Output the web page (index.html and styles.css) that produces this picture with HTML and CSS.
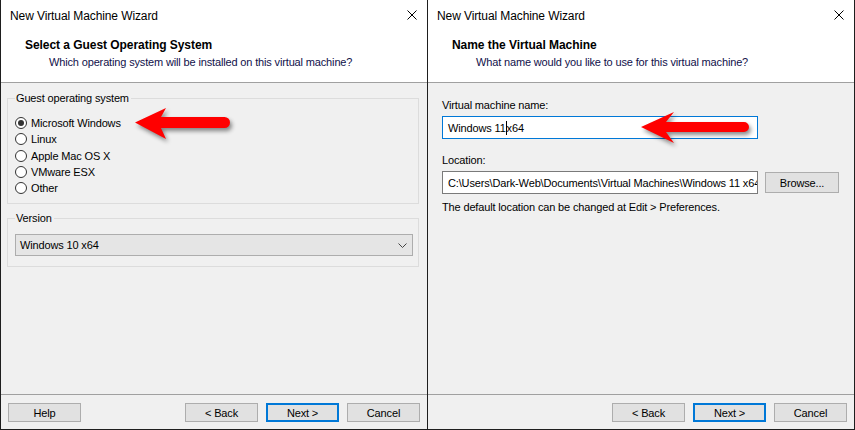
FILE: index.html
```html
<!DOCTYPE html>
<html lang="en">
<head>
  <meta charset="UTF-8" />
  <title>New Virtual Machine Wizard</title>
  <link rel="stylesheet" href="styles.css">
</head>
<body>
  <div class="screen">

    <!-- Step: guest OS -->
    <div class="window">
      <div class="titlebar">
        <div class="title-text">New Virtual Machine Wizard</div>
        <svg class="close-icon" viewBox="0 0 10 10"><path d="M0.5 0.5L9.5 9.5M9.5 0.5L0.5 9.5"/></svg>
      </div>
      <div class="header">
        <div class="header-title">Select a Guest Operating System</div>
        <div class="header-sub">Which operating system will be installed on this virtual machine?</div>
      </div>
      <div class="body body-os">
        <fieldset class="group">
          <legend>Guest operating system</legend>
          <div class="radio-row"><span class="radio checked"></span>Microsoft Windows</div>
          <div class="radio-row"><span class="radio"></span>Linux</div>
          <div class="radio-row"><span class="radio"></span>Apple Mac OS X</div>
          <div class="radio-row"><span class="radio"></span>VMware ESX</div>
          <div class="radio-row"><span class="radio"></span>Other</div>
        </fieldset>
        <fieldset class="group group-version">
          <legend>Version</legend>
          <div class="combo">
            <span>Windows 10 x64</span>
            <svg class="chevron" viewBox="0 0 9 5"><path d="M0.5 0.5L4.5 4.5L8.5 0.5"/></svg>
          </div>
        </fieldset>
      </div>
      <div class="footer">
        <button class="btn">Help</button>
        <div class="nav-buttons">
          <button class="btn">&lt; Back</button>
          <button class="btn default">Next &gt;</button>
          <button class="btn">Cancel</button>
        </div>
      </div>
    </div>

    <!-- Step: name -->
    <div class="window">
      <div class="titlebar">
        <div class="title-text">New Virtual Machine Wizard</div>
        <svg class="close-icon" viewBox="0 0 10 10"><path d="M0.5 0.5L9.5 9.5M9.5 0.5L0.5 9.5"/></svg>
      </div>
      <div class="header">
        <div class="header-title">Name the Virtual Machine</div>
        <div class="header-sub">What name would you like to use for this virtual machine?</div>
      </div>
      <div class="body body-name">
        <div class="field-label">Virtual machine name:</div>
        <div class="textbox focused">Windows 11<span class="caret"></span>x64</div>
        <div class="field-label label-location">Location:</div>
        <div class="location-row">
          <div class="textbox">C:\Users\Dark-Web\Documents\Virtual Machines\Windows 11 x64</div>
          <button class="btn browse">Browse...</button>
        </div>
        <div class="hint">The default location can be changed at Edit &gt; Preferences.</div>
      </div>
      <div class="footer">
        <div class="nav-buttons">
          <button class="btn">&lt; Back</button>
          <button class="btn default">Next &gt;</button>
          <button class="btn">Cancel</button>
        </div>
      </div>
    </div>

    <!-- Red annotation arrows -->
    <svg class="arrow arrow-os" viewBox="0 0 104 40">
      <path d="M2 17.5L33 3L28 12H91.5A5.5 5.5 0 0 1 91.5 23H28L33 34Z"/>
    </svg>
    <svg class="arrow arrow-name" viewBox="0 0 118 42">
      <path d="M2 18L35 3L27 13H105A5 5 0 0 1 105 23H27L35 34Z"/>
    </svg>
  </div>
</body>
</html>
```

FILE: styles.css
```css
/* Basic reset */
html, body {
  margin: 0;
  padding: 0;
  width: 855px;
  height: 430px;
  overflow: hidden;
  font-family: "Liberation Sans", Arial, sans-serif;
  font-size: 11px;
  letter-spacing: -0.15px;
  color: #000;
}

/* Two dialogs side by side on a dark frame */
.screen {
  position: relative;
  display: flex;
  gap: 1px;
  height: 430px;
  padding: 0 1px 1px 1px;
  box-sizing: border-box;
  background: #1e1e1e;
}
.window {
  width: 426px;
  display: flex;
  flex-direction: column;
  background: #f0f0f0;
}

/* Title bar */
.titlebar {
  height: 30px;
  background: #fff;
  display: flex;
  align-items: center;
  padding-left: 9px;
  padding-right: 10px;
}
.title-text {
  flex: 1;
  font-size: 12px;
  letter-spacing: -0.1px;
  padding-top: 1px;
}
.close-icon {
  width: 10px;
  height: 10px;
}
.close-icon path {
  stroke: #000;
  stroke-width: 1;
  fill: none;
}

/* Wizard header */
.header {
  height: 44px;
  background: #fff;
  border-bottom: 1px solid #a0a0a0;
  padding-top: 8px;
}
.header-title {
  font-weight: bold;
  font-size: 12px;
  letter-spacing: -0.05px;
  line-height: 15px;
  padding-left: 24px;
}
.header-sub {
  line-height: 16px;
  margin-top: 1px;
  padding-left: 48px;
  color: #10104a;
}

/* Content area */
.body {
  flex: 1;
}
.body-os {
  padding: 0 8px 0 6px;
}
.group {
  margin: 8px 0 0 0;
  padding: 10px 5px 7px 7px;
  border: 1px solid #dcdcdc;
  min-width: 0;
}
.group legend {
  padding: 0 2px 0 1px;
  line-height: 14px;
}
.group-version {
  margin-top: 7px;
  padding-top: 9px;
  padding-bottom: 10px;
}
.radio-row {
  display: flex;
  align-items: center;
  height: 16.3px;
  gap: 4px;
}
.radio {
  width: 12px;
  height: 12px;
  box-sizing: border-box;
  border: 1px solid #333;
  border-radius: 50%;
  background: #fff;
  display: flex;
  align-items: center;
  justify-content: center;
}
.radio.checked::after {
  content: "";
  width: 6px;
  height: 6px;
  border-radius: 50%;
  background: #333;
}
.combo {
  height: 22px;
  box-sizing: border-box;
  border: 1px solid #adadad;
  background: #e5e5e5;
  display: flex;
  align-items: center;
  padding: 0 5px 0 4px;
}
.combo span {
  flex: 1;
}
.chevron {
  width: 9px;
  height: 5px;
}
.chevron path {
  stroke: #444;
  fill: none;
}

/* Name page */
.body-name {
  padding: 14px 0 0 14px;
}
.field-label {
  line-height: 16px;
  margin-bottom: 3px;
}
.label-location {
  margin-top: 13px;
}
.textbox {
  width: 316px;
  height: 23px;
  box-sizing: border-box;
  border: 1px solid #7a7a7a;
  background: #fff;
  padding: 0 4px 0 5px;
  display: flex;
  align-items: center;
  white-space: nowrap;
  overflow: hidden;
}
.textbox.focused {
  border-color: #0078d7;
}
.caret {
  width: 1px;
  height: 14px;
  background: #000;
}
.location-row {
  display: flex;
  align-items: center;
  gap: 7px;
}
.hint {
  line-height: 16px;
  margin-top: 5px;
}

/* Footer with buttons */
.footer {
  border-top: 1px solid #a0a0a0;
  display: flex;
  padding: 8px 7px 7px 7px;
}
.nav-buttons {
  margin-left: auto;
  display: flex;
  gap: 8px;
}
.btn {
  width: 73px;
  height: 19px;
  box-sizing: border-box;
  border: 1px solid #adadad;
  background: #e1e1e1;
  font-family: inherit;
  font-size: 11px;
  letter-spacing: inherit;
  color: #000;
  padding: 0;
}
.btn.default {
  border: 2px solid #0078d7;
}
.btn.browse {
  width: 74px;
  height: 21px;
}

/* Annotation arrows drawn over the dialogs */
.arrow {
  position: absolute;
  filter: drop-shadow(2px 3px 2px rgba(0, 0, 0, 0.45));
}
.arrow path {
  fill: #ff0000;
}
.arrow-os {
  left: 133px;
  top: 105px;
  width: 104px;
  height: 40px;
}
.arrow-name {
  left: 639px;
  top: 109px;
  width: 118px;
  height: 42px;
}
```
